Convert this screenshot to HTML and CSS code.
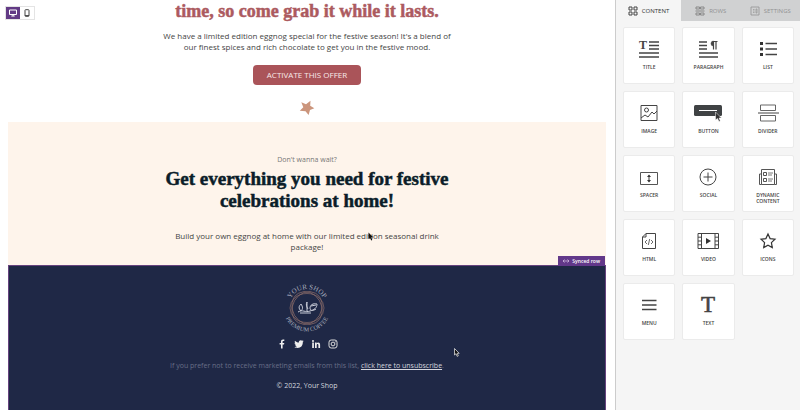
FILE: index.html
```html
<!DOCTYPE html>
<html lang="en">
<head>
<meta charset="utf-8">
<title>Email editor</title>
<link rel="stylesheet" href="styles.css">
</head>
<body>
<div class="editor">
  <main class="stage">
    <div class="devices">
      <button class="device device-on" aria-label="Desktop view"><svg width="8" height="8" viewBox="0 0 8 8"><path d="M.5 1h7v4.500h-7zM4 5.500v1.500M2.300 7h3.400" fill="none" stroke="#fff"/></svg></button>
      <button class="device" aria-label="Mobile view"><svg width="8" height="8" viewBox="0 0 8 8"><rect x="2" y=".7" width="4" height="6.600" rx=".6" fill="#fff" stroke="#444"/><path d="M2 6.600h4" stroke="#444"/></svg></button>
    </div>
    <div class="email">
      <section class="offer">
        <h1>time, so come grab it while it lasts.</h1>
        <p class="copy">We have a limited edition eggnog special for the festive season! It's a blend of<br>our finest spices and rich chocolate to get you in the festive mood.</p>
        <a class="cta" href="#offer">ACTIVATE THIS OFFER</a>
        <svg class="star" width="16" height="16" viewBox="0 0 16 16"><path d="M11.500.8 11.200 5.800 15.300 8.200 11 10 9.600 15 6.500 11.300.8 10.700 4.300 7.200 2.300 2.300 7 4.300z" fill="#cb957c"/></svg>
      </section>
      <section class="package">
        <p class="kicker">Don't wanna wait?</p>
        <h2>Get everything you need for festive<br>celebrations at home!</h2>
        <p class="copy">Build your own eggnog at home with our limited edition seasonal drink<br>package!</p>
      </section>
      <footer class="footer">
        <span class="synced"><svg width="6" height="6" viewBox="0 0 6 6"><path d="M0 3h6M1.500 1.500 0 3l1.500 1.500M4.500 1.500 6 3 4.500 4.500" fill="none" stroke="#cdb8dc" stroke-width=".8"/></svg>Synced row</span>
        <svg class="logo" width="50" height="50" viewBox="0 0 50 50" role="img" aria-label="Your Shop Premium Coffee">
          <defs><path id="arc-top" d="M6 25a19 19 0 0 1 38 0"/><path id="arc-bottom" d="M1.500 25a23.500 23.500 0 0 0 47 0"/></defs>
          <g fill="none" stroke="#8a6b68" stroke-width=".7"><ellipse cx="25" cy="25" rx="17" ry="14.500"/><ellipse cx="25" cy="25" rx="17" ry="14.500" transform="rotate(60 25 25)"/><ellipse cx="25" cy="25" rx="17" ry="14.500" transform="rotate(120 25 25)"/></g>
          <g fill="none" stroke="#c9ccd8" stroke-width="1"><path d="M16 29c5-3 7 1 12-1 4-1 7-3 7-7-4-1-7 1-7 4s3 3 6 1M25 28v-9M19 28c-3-3-2-5 0-7 2 3 2 5 0 7M26 26c-2-3-2-5-1-7M18 30h11"/><path d="M29 23l5-1"/></g>
          <text class="logo-text"><textPath href="#arc-top" startOffset="50%">YOUR SHOP</textPath></text>
          <text class="logo-text logo-small"><textPath href="#arc-bottom" startOffset="50%">PREMIUM COFFEE</textPath></text>
        </svg>
        <nav class="social">
          <a href="#facebook" aria-label="Facebook"><svg width="10" height="10" viewBox="0 0 10 10"><path d="M4 9.500V5.500H2.600V3.900H4V2.600C4 1.200 4.800.5 6 .5h1.300V2H6.400c-.6 0-.8.300-.8.800v1.100h1.700L7 5.500H5.600v4z" fill="#eee"/></svg></a>
          <a href="#twitter" aria-label="Twitter"><svg width="10" height="10" viewBox="0 0 10 10"><path d="M1 1.700c1 1.200 2.300 1.800 3.900 1.900-.3-1.500.6-2.400 1.800-2.400.6 0 1.100.2 1.500.6l1.200-.5-.7 1.200 1-.2-.9 1C8.900 6.700 6.700 9 3.700 9 2.500 9 1.200 8.700.4 8.100c1 .1 1.900-.2 2.600-.8-.8 0-1.500-.6-1.700-1.300h.8C1.100 5.700.6 5 .6 4l.8.300C.6 3.600.5 2.600 1 1.700z" fill="#eee"/></svg></a>
          <a href="#linkedin" aria-label="LinkedIn"><svg width="10" height="10" viewBox="0 0 10 10"><path d="M1.200 3.600h1.700V9H1.200zM4 3.600h1.600v.8c.8-1.400 3.500-1.200 3.500 1.300V9H7.400V6.200c0-1.600-1.700-1.400-1.700 0V9H4z" fill="#eee"/><circle cx="2" cy="1.900" r="1" fill="#eee"/></svg></a>
          <a href="#instagram" aria-label="Instagram"><svg width="10" height="10" viewBox="0 0 10 10"><rect x="1" y="1" width="8" height="8" rx="2.200" fill="none" stroke="#ddd"/><circle cx="5" cy="5" r="1.900" fill="none" stroke="#ddd"/><circle cx="7.300" cy="2.700" r=".5" fill="#ddd"/></svg></a>
        </nav>
        <p class="unsub">If you prefer not to receive marketing emails from this list, <a href="#unsubscribe">click here to unsubscribe</a>.</p>
        <p class="copyright">© 2022, Your Shop</p>
      </footer>
    </div>
    <svg class="pointer pointer-dark" width="6" height="9" viewBox="0 0 6 9"><path d="M.5.500v6.500L2 5.700 3.200 8.400 4.300 7.900 3.200 5.300h2z" fill="#111"/></svg>
    <svg class="pointer pointer-light" width="6" height="9" viewBox="0 0 6 9"><path d="M.5.500v6.500L2 5.700 3.200 8.400 4.300 7.900 3.200 5.300h2z" fill="#111" stroke="#ddd" stroke-width=".8"/></svg>
  </main>
  <aside class="panel">
    <div class="tabs">
      <button class="tab tab-on"><svg width="10" height="10" viewBox="0 0 10 10"><path d="M1 1h3v3H1zM6 1h3v3H6zM1 6h3v3H1zM6 6h3v3H6z" fill="none" stroke="#444"/></svg>CONTENT</button>
      <button class="tab"><svg width="10" height="10" viewBox="0 0 10 10"><path d="M1 1h3.500v2H1zM5.500 1H9v2H5.500zM1 7h3.500v2H1zM5.500 7H9v2H5.500zM.5 5h9" fill="none" stroke="#888"/></svg>ROWS</button>
      <button class="tab"><svg width="10" height="10" viewBox="0 0 10 10"><path d="M1 1h8v8H1z" fill="none" stroke="#929292" stroke-width=".8"/><path d="M3 3.500h1.500M3 5h1.500M3 6.500h1.500M6 3h1v4H6z" fill="none" stroke="#929292" stroke-width=".7"/></svg>SETTINGS</button>
    </div>
    <div class="tiles">
      <button class="tile"><svg width="28" height="20" viewBox="0 0 28 20"><text class="glyph" x="4" y="10" font-size="12">T</text><path d="M14 3h10M14 6.500h10M14 10h10M4 14h20M4 18h20" stroke="#444" stroke-width="1.300"/></svg><span>TITLE</span></button>
      <button class="tile"><svg width="28" height="20" viewBox="0 0 28 20"><path d="M5 3h8M5 6.500h8M5 10h8M5 14h19M5 18h19" stroke="#444" stroke-width="1.300"/><path d="M23.500 2.500h-5M19.500 2v8.500M22 2v8.500" stroke="#444" fill="none" stroke-width="1.200"/><path d="M19.500 2a2.500 2.500 0 0 0 0 5z" fill="#444" stroke="#444" stroke-width=".5"/></svg><span>PARAGRAPH</span></button>
      <button class="tile"><svg width="28" height="20" viewBox="0 0 28 20"><path d="M6 4.500h3M6 10h3M6 15.500h3" stroke="#333" stroke-width="3"/><path d="M11.500 4.500H23M11.500 10H23M11.500 15.500H23" stroke="#444" stroke-width="1.500"/></svg><span>LIST</span></button>
      <button class="tile"><svg width="28" height="20" viewBox="0 0 28 20"><g fill="none" stroke="#444"><path d="M6 2.500h16v15H6z"/><circle cx="11.500" cy="7" r="2"/><path d="m6 15 4-3 3 2 4-5 2 2 3-3"/></g></svg><span>IMAGE</span></button>
      <button class="tile"><svg width="28" height="20" viewBox="0 0 28 20"><rect y="2" width="28" height="11" rx="1.500" fill="#3f4244"/><path d="M5 7.500h18" stroke="#fff"/><path d="M21.500 9v8l2-1.500 1.500 3 1.300-.6-1.300-2.900h2.500z" fill="#333" stroke="#fff" stroke-width=".5"/></svg><span>BUTTON</span></button>
      <button class="tile"><svg width="28" height="20" viewBox="0 0 28 20"><path d="M6.500 2h15v5.500h-15zM6.500 12.500h15V18h-15z" fill="none" stroke="#666"/><path d="M4 10h21" stroke="#444"/></svg><span>DIVIDER</span></button>
      <button class="tile"><svg width="28" height="20" viewBox="0 0 28 20"><path d="M5.500 5.500h17v12h-17z" fill="none" stroke="#555"/><path d="M14 8.500v6" stroke="#333"/><path d="m12 10 2-2.500 2 2.500zM12 13l2 2.500 2-2.500z" fill="#333"/></svg><span>SPACER</span></button>
      <button class="tile"><svg width="28" height="20" viewBox="0 0 28 20"><circle cx="14" cy="10" r="8" fill="none" stroke="#444"/><path d="M9.500 10h9M14 5.500v9" stroke="#444"/></svg><span>SOCIAL</span></button>
      <button class="tile"><svg width="28" height="20" viewBox="0 0 28 20"><g fill="none" stroke="#555"><path d="M7.500 2.500h13v15h-13zM7.500 7H5.500v10.500h2M20.500 7h2v10.500h-2M9.500 5.500h3v3h-3zM9.500 11.500h3v3h-3z"/><path d="M14 6h5M14 8h4M14 12h5M14 14h4" stroke-width=".8"/></g></svg><span>DYNAMIC<br>CONTENT</span></button>
      <button class="tile"><svg width="28" height="20" viewBox="0 0 28 20"><g fill="none" stroke="#444"><path d="M11 2.500h9.500v15h-13V6zM11 2.500V6H7.500"/><path d="m12 9-2 2 2 2M16 9l2 2-2 2M14.700 8l-1.400 6" stroke-width=".8"/></g></svg><span>HTML</span></button>
      <button class="tile"><svg width="28" height="20" viewBox="0 0 28 20"><path d="M4 2.500h20.500v15H4zM7.500 2.500v15M21 2.500v15M4 6.200h3.500M4 10h3.500M4 13.800h3.500M21 6.200h3.500M21 10h3.500M21 13.800h3.500" fill="none" stroke="#444"/><path d="M12 7v6l5-3z" fill="#333"/></svg><span>VIDEO</span></button>
      <button class="tile"><svg width="28" height="20" viewBox="0 0 28 20"><path d="m14 3 2.100 4.600 4.900.6-3.600 3.400.9 5-4.300-2.400-4.300 2.400.9-5L7 8.200l4.900-.6z" fill="none" stroke="#333" stroke-width="1.200"/></svg><span>ICONS</span></button>
      <button class="tile"><svg width="28" height="20" viewBox="0 0 28 20"><path d="M7 5.500h14.500M7 10h14.500M7 14.500h14.500" stroke="#444" stroke-width="1.700"/></svg><span>MENU</span></button>
      <button class="tile"><svg width="28" height="20" viewBox="0 0 28 20"><text class="glyph glyph-light" x="14" y="17" font-size="23" text-anchor="middle">T</text></svg><span>TEXT</span></button>
    </div>
  </aside>
</div>
</body>
</html>
```
FILE: styles.css
```css
* { box-sizing: border-box; }
body { margin: 0; font-family: "Open Sans", "Noto Sans", sans-serif; background: #fff; }
h1, h2, p { margin: 0; font-weight: 400; }
button { border: 0; padding: 0; font: inherit; color: inherit; cursor: pointer; }
svg { display: block; overflow: visible; }

.editor { display: flex; height: 100vh; overflow: hidden; }
.stage { position: relative; flex: 1; display: flex; padding: 0 9px 0 8px; }
.email { flex: 1; display: flex; flex-direction: column; text-align: center; white-space: nowrap; }

.devices { position: absolute; left: 5px; top: 6px; display: flex; border: 1px solid #e4e4e4; }
.device { display: flex; align-items: center; justify-content: center; width: 14px; height: 12px; background: #fff; }
.device-on { background: #623a85; }

h1, h2 { font-family: "Liberation Serif", serif; font-weight: 700; line-height: 22px; -webkit-text-stroke: 0.5px currentColor; }
h1 { font-size: 18px; color: #ac5a5f; }
h2 { font-size: 19px; color: #0b1d29; }
.copy { font-size: 8px; line-height: 11px; color: #444; }

.offer { display: flex; flex-direction: column; align-items: center; height: 122px; flex: none; }
.offer .copy { margin-top: 8px; }
.cta { margin-top: 13px; padding: 0 14px; border-radius: 4px; background: #aa5459; color: #f8e9e9; font-size: 8px; line-height: 20px; text-decoration: none; }
.star { margin-top: 15px; }

.package { flex: none; height: 143px; padding-top: 32px; background: #fef4eb; }
.kicker { font-size: 7px; line-height: 11px; color: #777; }
.package h2 { margin-top: 3px; }
.package .copy { margin-top: 18px; }

.footer { position: relative; flex: 1; display: flex; flex-direction: column; align-items: center; padding-top: 17px; border: 1px solid #66437e; border-bottom: 0; background: #1f2846; }
.synced { position: absolute; right: 0; bottom: 100%; display: flex; align-items: center; gap: 3px; padding: 0 5px; background: #62388a; color: #fff; font-size: 5px; font-weight: 600; line-height: 10px; }
.logo-text { font: 7px "Liberation Serif", serif; fill: #a9adbd; text-anchor: middle; }
.logo-small { font-size: 6px; }
.social { display: flex; gap: 7px; margin-top: 6px; }
.unsub, .copyright { font-size: 7px; line-height: 10px; }
.unsub { margin-top: 12px; color: #686e87; }
.unsub a { color: #d4d6df; }
.copyright { margin-top: 10px; color: #d4d6df; }

.pointer { position: absolute; }
.pointer-dark { left: 368px; top: 232px; }
.pointer-light { left: 454px; top: 348px; }

.panel { flex: none; width: 185px; border-left: 1px solid #ccc; background: #f5f5f5; color: #444; }
.tabs { display: flex; background: #d0d1d2; }
.tab { display: flex; align-items: center; justify-content: center; gap: 4px; flex: 1; height: 21px; background: none; color: #929292; font-size: 6px; }
.tab-on { flex: none; width: 65px; background: #f5f5f5; color: #333; }
.tiles { display: grid; grid-template-columns: repeat(3, 1fr); gap: 7px; padding: 6px 6px 0 7px; }
.tile { display: flex; flex-direction: column; align-items: center; height: 57px; padding-top: 11px; border: 1px solid #ebebeb; border-radius: 2px; background: #fff; font-size: 5px; font-weight: 600; line-height: 6px; }
.tile span { margin-top: 5px; }
.glyph { font-family: "Liberation Serif", serif; font-weight: 700; fill: #444; }
.glyph-light { font-weight: 400; stroke: #444; stroke-width: 0.6px; }
```
